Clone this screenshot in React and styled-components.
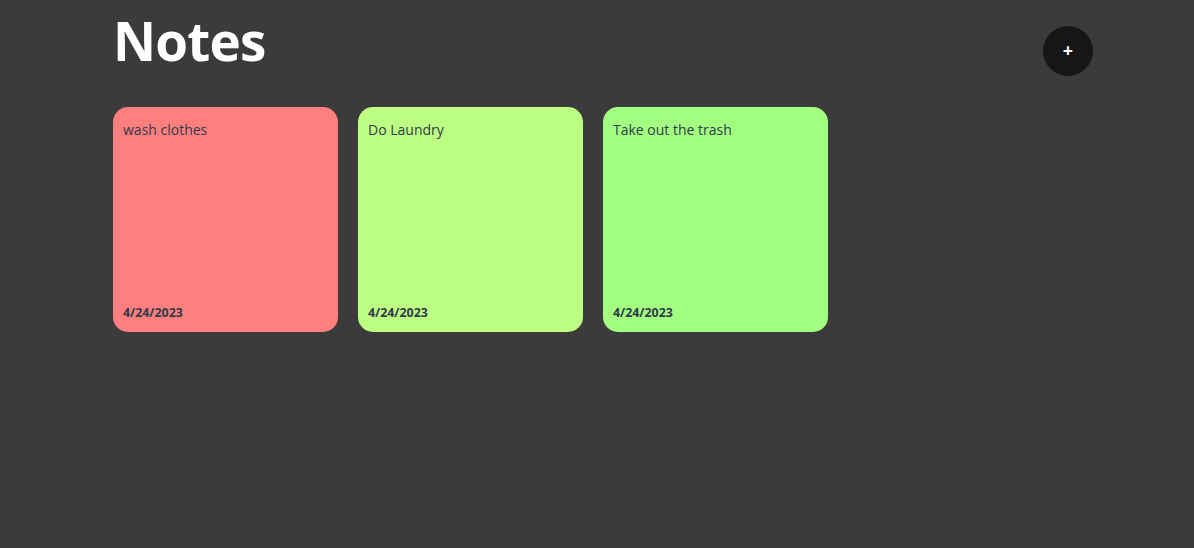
import React from "react";
import styled, { createGlobalStyle } from "styled-components";

const Global = createGlobalStyle`
  html, body { margin: 0; padding: 0; background: #3b3b3b; }
  body { font-family: "Open Sans", "Noto Sans", sans-serif; }
`;

const Page = styled.div`
  min-height: 548px;
  padding: 0 101px 0 113px;
  box-sizing: border-box;
`;

const Header = styled.header`
  display: flex;
  justify-content: space-between;
  align-items: flex-start;
  height: 107px;
`;

const Title = styled.h1`
  margin: 0;
  margin-top: 4px;
  color: #ffffff;
  font-size: 53px;
  font-weight: 700;
  line-height: 74px;
  letter-spacing: -0.8px;
`;

const AddButton = styled.button`
  width: 50px;
  height: 50px;
  margin-top: 26px;
  border: none;
  border-radius: 50%;
  background: #161616;
  color: #ffffff;
  font-family: inherit;
  font-size: 18px;
  font-weight: 700;
  line-height: 1;
  display: flex;
  align-items: center;
  justify-content: center;
  padding: 0 0 2px;
  cursor: pointer;
`;

const Grid = styled.div`
  display: flex;
  gap: 20px;
`;

const Card = styled.div`
  width: 225px;
  height: 225px;
  box-sizing: border-box;
  border-radius: 15px;
  padding: 13px 10px 11px;
  background: ${(p) => p.$color};
  display: flex;
  flex-direction: column;
  justify-content: space-between;
  color: #2f3a4a;
`;

const Text = styled.div`
  font-size: 14px;
  line-height: 20px;
`;

const DateText = styled.div`
  font-size: 12.4px;
  font-weight: 700;
  line-height: 16px;
`;

const notes = [
  { text: "wash clothes", color: "#ff7f7f", date: "4/24/2023" },
  { text: "Do Laundry", color: "#bdff83", date: "4/24/2023" },
  { text: "Take out the trash", color: "#a2ff80", date: "4/24/2023" },
];

export default function App() {
  return (
    <>
      <Global />
      <Page>
        <Header>
          <Title>Notes</Title>
          <AddButton>+</AddButton>
        </Header>
        <Grid>
          {notes.map((n) => (
            <Card key={n.text} $color={n.color}>
              <Text>{n.text}</Text>
              <DateText>{n.date}</DateText>
            </Card>
          ))}
        </Grid>
      </Page>
    </>
  );
}
